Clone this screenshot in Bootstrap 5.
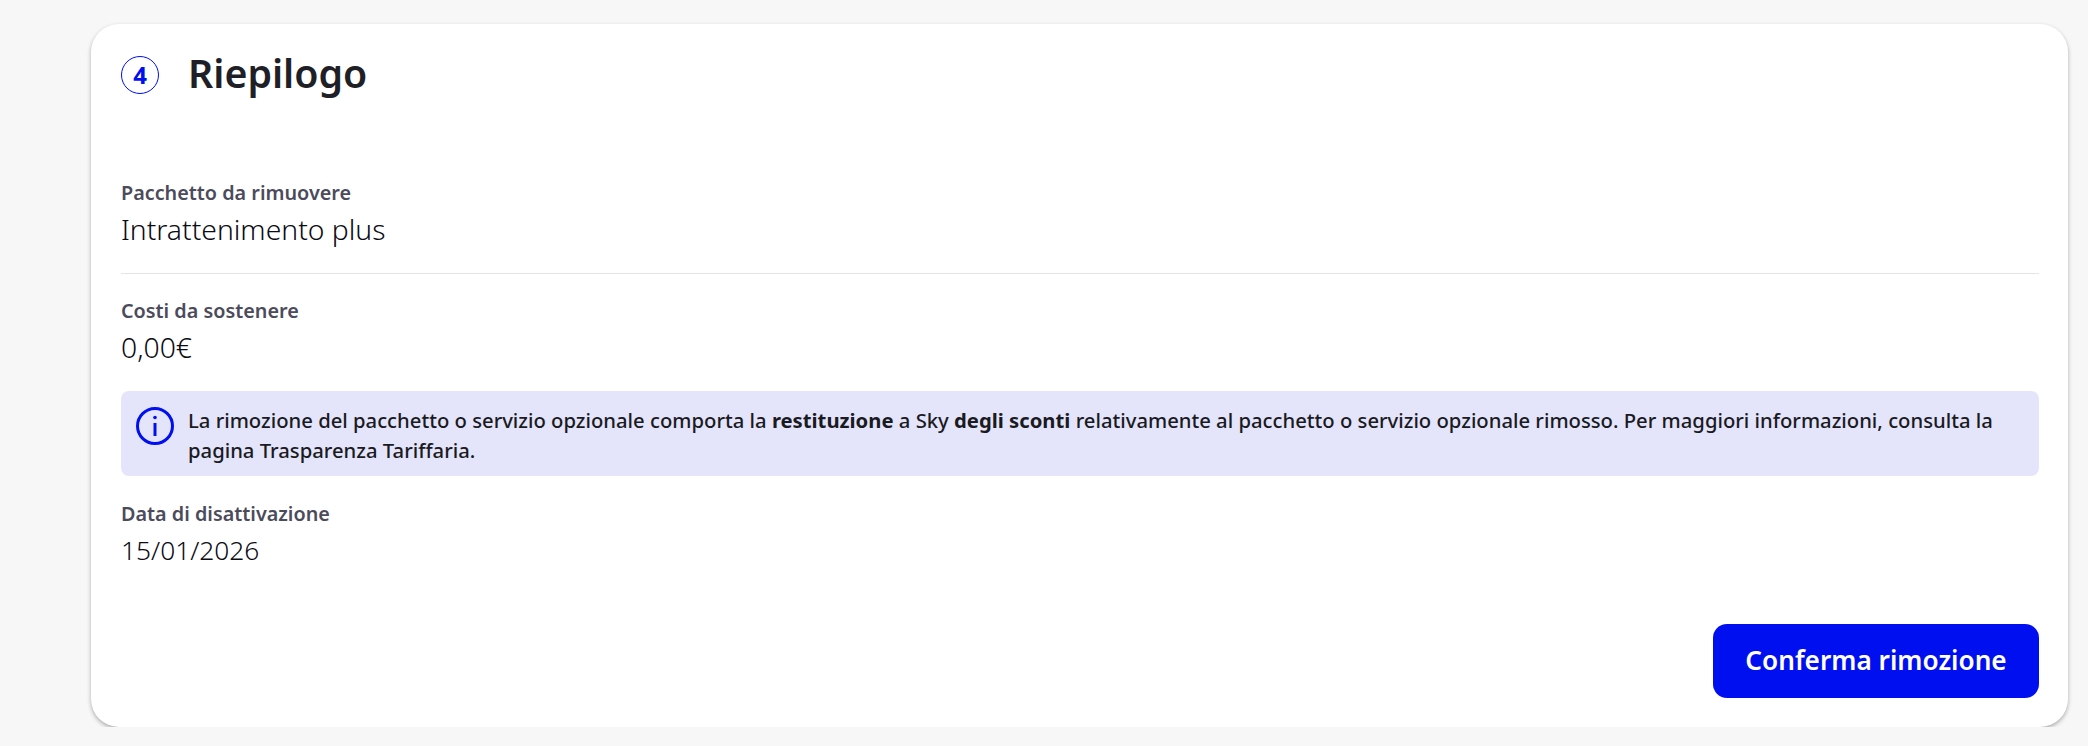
<!DOCTYPE html>
<html lang="it">
<head>
  <meta charset="UTF-8" />
  <title>Riepilogo</title>
  <link href="https://cdn.jsdelivr.net/npm/bootstrap@5.3.3/dist/css/bootstrap.min.css" rel="stylesheet">
  <style>
    body {
      background-color: #f7f7f7;
      font-family: "Noto Sans", sans-serif;
      color: #1a1a22;
      padding: 24px 20px 0 91px;
    }
    .summary-card {
      height: 703px;
      padding: 26px 29px 29px 30px;
      background: #fff;
      border-radius: 28px;
      box-shadow: 0 2px 4px rgba(0,0,0,0.3);
    }
    .summary-head {
      margin-bottom: 79px;
    }
    .step-num {
      width: 38px;
      height: 38px;
      border: 1.5px solid #000ff0;
      color: #000ff0;
      font-size: 24px;
      font-weight: 700;
    }
    .summary-title {
      margin: -2px 0 2px 29px;
      font-size: 39.3px;
      line-height: 50px;
      font-weight: 600;
      color: #1f1f27;
    }
    .field-label {
      font-size: 19.8px;
      line-height: 28px;
      font-weight: 600;
      color: #4b4b5c;
    }
    .field-value {
      margin-top: 2px;
      font-size: 28.3px;
      line-height: 40px;
      font-weight: 300;
      color: #0c0c14;
    }
    .date-value {
      font-size: 26.3px;
    }
    .summary-sep {
      margin: 24px 0 23px;
      border-top: 1px solid #e4e4e4;
      opacity: 1;
    }
    .info-box {
      height: 85px;
      margin: 24px 0 24px;
      padding: 14px 16px 14px 15px;
      background: #e4e5fb;
      border-radius: 8px;
      font-size: 20.25px;
      line-height: 30px;
      font-weight: 500;
      gap: 14px;
    }
    .info-box svg {
      flex: none;
      margin-top: 2px;
    }
    .confirm-btn {
      width: 326px;
      height: 74px;
      background: #000ff0;
      color: #fff;
      border: 0;
      border-radius: 14px;
      font-size: 26.2px;
      font-weight: 600;
    }
  </style>
</head>
<body>

<div class="summary-card d-flex flex-column">
  <div class="summary-head d-flex align-items-center">
    <span class="step-num rounded-circle d-flex align-items-center justify-content-center">4</span>
    <h2 class="summary-title">Riepilogo</h2>
  </div>

  <div>
    <div class="field-label">Pacchetto da rimuovere</div>
    <div class="field-value">Intrattenimento plus</div>
  </div>
  <hr class="summary-sep">
  <div>
    <div class="field-label">Costi da sostenere</div>
    <div class="field-value">0,00€</div>
  </div>

  <div class="info-box d-flex">
    <svg width="38" height="38" viewBox="0 0 38 38" fill="none" stroke="#000ff0" stroke-width="3">
      <circle cx="19" cy="19" r="17.5"/>
      <path d="M19 16v13"/>
      <circle cx="19" cy="10.5" r="1.8" fill="#000ff0" stroke="none"/>
    </svg>
    <div>La rimozione del pacchetto o servizio opzionale comporta la <b>restituzione</b> a Sky <b>degli sconti</b> relativamente al pacchetto o servizio opzionale rimosso. Per maggiori informazioni, consulta la<br>pagina Trasparenza Tariffaria.</div>
  </div>

  <div>
    <div class="field-label">Data di disattivazione</div>
    <div class="field-value date-value">15/01/2026</div>
  </div>

  <div class="d-flex justify-content-end mt-auto">
    <button class="btn confirm-btn" type="button">Conferma rimozione</button>
  </div>
</div>

<script src="https://cdn.jsdelivr.net/npm/bootstrap@5.3.3/dist/js/bootstrap.bundle.min.js"></script>
</body>
</html>
